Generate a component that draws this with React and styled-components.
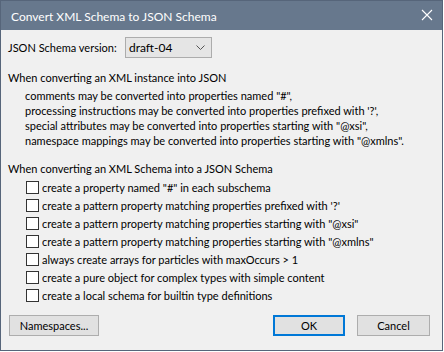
import React from "react";
import styled, { createGlobalStyle } from "styled-components";

const GlobalStyle = createGlobalStyle`
  html, body {
    margin: 0;
    background: #ffffff;
  }
  body {
    font-family: Lato, "Liberation Sans", sans-serif;
    font-size: 11px;
    color: #000000;
  }
`;

const infoLines = [
  'comments may be converted into properties named "#",',
  "processing instructions may be converted into properties prefixed with '?',",
  'special attributes may be converted into properties starting with "@xsi",',
  'namespace mappings may be converted into properties starting with "@xmlns".',
];

const options = [
  'create a property named "#" in each subschema',
  "create a pattern property matching properties prefixed with '?'",
  'create a pattern property matching properties starting with "@xsi"',
  'create a pattern property matching properties starting with "@xmlns"',
  "always create arrays for particles with maxOccurs > 1",
  "create a pure object for complex types with simple content",
  "create a local schema for builtin type definitions",
];

const App = () => {
  return (
    <>
      <GlobalStyle />
      <Window>
        <TitleBar>
          <Title>Convert XML Schema to JSON Schema</Title>
          <CloseButton>
            <svg width="12" height="12" viewBox="0 0 12 12">
              <path d="M1 1 L11 11 M11 1 L1 11" stroke="#ffffff" strokeWidth="1.1" />
            </svg>
          </CloseButton>
        </TitleBar>

        <Body>
          <VersionRow>
            <Label>JSON Schema version:</Label>
            <Select>
              <span>draft-04</span>
              <svg width="9" height="5" viewBox="0 0 9 5">
                <path d="M0.5 0.5 L4.5 4.5 L8.5 0.5" fill="none" stroke="#555555" strokeWidth="1" />
              </svg>
            </Select>
          </VersionRow>

          <Section>
            <Heading>When converting an XML instance into JSON</Heading>
            <InfoList>
              {infoLines.map((line) => (
                <InfoLine key={line}>{line}</InfoLine>
              ))}
            </InfoList>
          </Section>

          <Section $gap={13}>
            <Heading>When converting an XML Schema into a JSON Schema</Heading>
            <OptionList>
              {options.map((opt) => (
                <Option key={opt}>
                  <CheckBox />
                  <span>{opt}</span>
                </Option>
              ))}
            </OptionList>
          </Section>

          <ButtonBar>
            <Button $width={90}>Namespaces...</Button>
            <Spacer />
            <Button $width={72} $primary>OK</Button>
            <Button $width={73}>Cancel</Button>
          </ButtonBar>
        </Body>
      </Window>
    </>
  );
};

export default App;

const Window = styled.div`
  width: 443px;
  height: 351px;
  box-sizing: border-box;
  border: 1px solid #56657a;
  background-color: #f0f0f0;
  display: flex;
  flex-direction: column;
`;

const TitleBar = styled.div`
  height: 29px;
  background-color: #67788d;
  display: flex;
  align-items: center;
  justify-content: space-between;
  padding: 0 9px 0 10px;
`;

const Title = styled.div`
  color: #ffffff;
  font-size: 12px;
  margin-top: 1px;
`;

const CloseButton = styled.div`
  width: 12px;
  height: 12px;
  display: flex;
  margin-top: -1px;
`;

const Body = styled.div`
  flex: 1;
  display: flex;
  flex-direction: column;
  padding: 7px 12px 0 7px;
`;

const VersionRow = styled.div`
  display: flex;
  align-items: center;
  height: 21px;
`;

const Label = styled.div`
  width: 117px;
`;

const Select = styled.div`
  width: 87px;
  height: 21px;
  box-sizing: border-box;
  border: 1px solid #acacac;
  background-color: #e5e5e5;
  display: flex;
  align-items: center;
  justify-content: space-between;
  padding: 0 6px 0 3px;
  font-size: 12px;
`;

const Section = styled.div`
  margin-top: ${(p) => p.$gap || 12}px;
  display: flex;
  flex-direction: column;
`;

const Heading = styled.div`
  line-height: 15px;
`;

const InfoList = styled.div`
  margin-top: 3px;
  padding-left: 17px;
`;

const InfoLine = styled.div`
  line-height: 15px;
  white-space: nowrap;
`;

const OptionList = styled.div`
  margin-top: 2px;
  padding-left: 18px;
`;

const Option = styled.div`
  height: 18px;
  display: flex;
  align-items: center;
  gap: 3px;
  white-space: nowrap;
`;

const CheckBox = styled.div`
  width: 13px;
  height: 13px;
  box-sizing: border-box;
  border: 1px solid #333333;
  background-color: #ffffff;
  flex-shrink: 0;
`;

const ButtonBar = styled.div`
  margin-top: 11px;
  display: flex;
  gap: 12px;
  padding-left: 1px;
`;

const Spacer = styled.div`
  flex: 1;
`;

const Button = styled.div`
  width: ${(p) => p.$width}px;
  height: 21px;
  box-sizing: border-box;
  border: ${(p) => (p.$primary ? "2px solid #0078d7" : "1px solid #adadad")};
  background-color: #e1e1e1;
  display: flex;
  align-items: center;
  justify-content: center;
  font-size: 11px;
`;
